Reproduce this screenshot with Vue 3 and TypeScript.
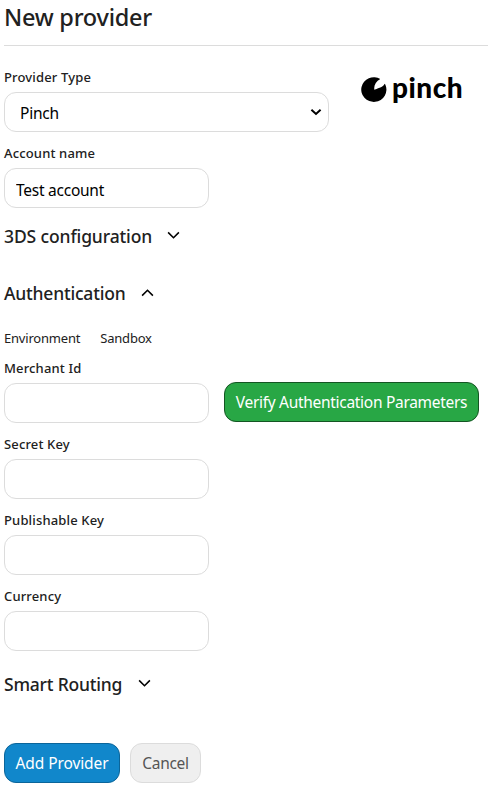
<script setup lang="ts">
import { ref } from 'vue'

const providerType = ref('Pinch')
const accountName = ref('Test account')
const credentials = ref([
  { label: 'Secret Key', value: '' },
  { label: 'Publishable Key', value: '' },
  { label: 'Currency', value: '' },
])
</script>

<template>
  <main class="page">
    <h1>New provider</h1>
    <form class="form" @submit.prevent>
      <div class="provider-row">
        <label class="field wide">
          <span class="label">Provider Type</span>
          <span class="select">
            <select v-model="providerType"><option>Pinch</option></select>
            <svg class="caret" viewBox="0 0 12 8"><path d="M1.4 1.8 6 6l4.6-4.2" /></svg>
          </span>
        </label>
        <div class="brand">
          <svg class="mark" viewBox="0 0 26 26">
            <path d="M19.3 1.9A12.6 12.4 0 1 0 24.3 7.4L23.6 6.7C22.5 10 18.3 10.6 14 12.6Q13.3 13 13.3 12.2C12.8 8 15 4.1 19.3 1.9Z" />
          </svg>
          <span class="wordmark">pinch</span>
        </div>
      </div>
      <label class="field">
        <span class="label">Account name</span>
        <input v-model="accountName" type="text" />
      </label>

      <h2 class="threeds"><span>3DS configuration</span><svg viewBox="0 0 14 9"><path d="m1.2 1.2 5.8 5.7 5.8-5.7" /></svg></h2>
      <h2><span>Authentication</span><svg class="up" viewBox="0 0 14 9"><path d="m1.2 1.2 5.8 5.7 5.8-5.7" /></svg></h2>

      <div class="environment"><span>Environment</span><span>Sandbox</span></div>
      <div class="merchant-row">
        <label class="field">
          <span class="label">Merchant Id</span>
          <input type="text" />
        </label>
        <button class="btn verify" type="button">Verify Authentication Parameters</button>
      </div>
      <label v-for="c in credentials" :key="c.label" class="field">
        <span class="label">{{ c.label }}</span>
        <input v-model="c.value" type="text" />
      </label>

      <h2 class="routing"><span>Smart Routing</span><svg viewBox="0 0 14 9"><path d="m1.2 1.2 5.8 5.7 5.8-5.7" /></svg></h2>

      <div class="actions">
        <button class="btn add" type="submit">Add Provider</button>
        <button class="btn cancel" type="button">Cancel</button>
      </div>
    </form>
  </main>
</template>

<style>
body { background: #fff; }
</style>

<style scoped>
* { box-sizing: border-box; }
.page { height: 785px; overflow: hidden; padding-left: 4px; font-family: "Noto Sans", "Open Sans", sans-serif; color: #212121; }
h1 { margin: 0; height: 46px; border-bottom: 1px solid #dcdcdc; font-size: 23.5px; font-weight: 500; line-height: 35px; letter-spacing: -0.25px; white-space: nowrap; }
.form { padding-top: 10px; }
.provider-row, .merchant-row { display: flex; }
.field { display: block; width: 205px; height: 76px; }
.wide { width: 325px; }
.label { display: block; height: 36px; padding-top: 11px; font-size: 13px; font-weight: 500; line-height: 20px; letter-spacing: 0.15px; white-space: nowrap; }
input, select { display: block; width: 100%; height: 40px; border: 1px solid #dcdcdc; border-radius: 12px; background: #fff; color: #000; font-family: inherit; font-size: 15.5px; letter-spacing: -0.25px; outline: none; }
input { padding: 3px 11px 0; }
select { appearance: none; padding: 2px 15px 0; }
.select { display: grid; grid-template-columns: 1fr 20px; align-items: center; }
.select select { grid-area: 1 / 1 / 2 / 3; }
.caret { grid-area: 1 / 2; width: 12px; height: 8px; margin-left: 1px; fill: none; stroke: #000; stroke-width: 2; pointer-events: none; }
.brand { display: flex; align-items: flex-start; padding: 20.5px 0 0 32px; }
.mark { width: 26px; height: 26px; fill: #000; }
.wordmark { margin: -6px 0 0 5px; font-family: Lato, sans-serif; font-size: 28px; line-height: 32px; font-weight: 900; letter-spacing: 0.5px; color: #000; }
h2 { display: flex; align-items: center; margin: 0; height: 57px; font-size: 17.5px; font-weight: 500; line-height: 57px; letter-spacing: -0.2px; white-space: nowrap; }
.threeds { letter-spacing: -0.12px; }
h2 svg { width: 13px; height: 9px; margin: -2px 0 0 16px; fill: none; stroke: #000; stroke-width: 1.7; }
.threeds svg { margin-left: 15px; }
h2 .up { transform: rotate(180deg); }
.environment { display: flex; gap: 20px; height: 25px; padding-top: 6px; font-size: 13px; line-height: 20px; letter-spacing: -0.2px; }
.merchant-row { gap: 15px; }
.btn { height: 40px; padding: 1px 0 0; border: 1px solid; border-radius: 12px; font-family: inherit; font-size: 15.5px; line-height: 37px; letter-spacing: -0.3px; white-space: nowrap; }
.verify { width: 255px; margin-top: 35px; background: #28a745; border-color: #145523; color: #fff; }
.routing { margin-top: 5px; }
.actions { display: flex; gap: 10px; padding-top: 30px; }
.add { width: 116px; background: #1187cb; border-color: #0b659a; color: #fff; letter-spacing: -0.1px; }
.cancel { width: 71px; background: #efefef; border-color: #dcdcdc; color: #555; }
</style>
